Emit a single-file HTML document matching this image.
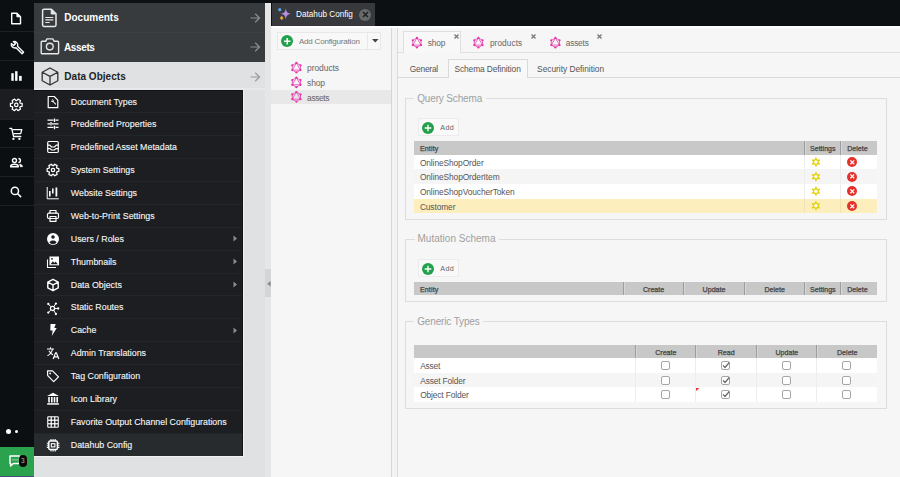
<!DOCTYPE html>
<html><head><meta charset="utf-8">
<style>
*{box-sizing:border-box}
html,body{margin:0;padding:0}
body{width:900px;height:477px;overflow:hidden;position:relative;background:#f6f6f6;font-family:"Liberation Sans",sans-serif}
.a{position:absolute}
.t{position:absolute;white-space:nowrap;line-height:1}
svg{position:absolute;overflow:visible}
</style></head><body>
<div class="a" style="left:0px;top:0px;width:900px;height:25.5px;background:#0d1013;"></div>
<div class="a" style="left:0px;top:0px;width:34px;height:477px;background:#0c0f12;"></div>
<div class="a" style="left:0px;top:89px;width:34px;height:30px;background:#1b1d20;"></div>
<div class="a" style="left:0px;top:31.0px;width:34px;height:1px;background:#1e2124;"></div>
<div class="a" style="left:0px;top:60.0px;width:34px;height:1px;background:#1e2124;"></div>
<div class="a" style="left:0px;top:118.5px;width:34px;height:1px;background:#1e2124;"></div>
<div class="a" style="left:0px;top:147.3px;width:34px;height:1px;background:#1e2124;"></div>
<div class="a" style="left:0px;top:176.2px;width:34px;height:1px;background:#1e2124;"></div>
<div class="a" style="left:0px;top:205.0px;width:34px;height:1px;background:#1e2124;"></div>
<svg style="left:10px;top:11.7px" width="12" height="13" viewBox="0 0 12 13"><path d="M1.7 1.2h5.2l3.6 3.6v7H1.7z" fill="none" stroke="#fff" stroke-width="1.4" stroke-linejoin="round"/><path d="M6.9 1.2v3.6h3.6" fill="#fff" stroke="#fff" stroke-width="1"/></svg>
<svg style="left:8.8px;top:39.4px" width="15" height="15" viewBox="0 0 15 15"><g transform="scale(1.08)"><path d="M2.2 4.2a3.3 3.3 0 0 0 4.3 3.9l5.6 5.6 1.4-1.4-5.6-5.6a3.3 3.3 0 0 0-3.9-4.3l2 2-1.6 1.6z" fill="none" stroke="#fff" stroke-width="1.25" stroke-linejoin="round"/></g></svg>
<svg style="left:10.5px;top:71px" width="11" height="10" viewBox="0 0 11 10"><rect x="0.3" y="2.2" width="2.4" height="7.6" fill="#fff"/><rect x="4.1" y="0.2" width="2.4" height="9.6" fill="#fff"/><rect x="8.1" y="4.9" width="2.6" height="4.9" fill="#fff"/></svg>
<svg style="left:0px;top:0px" width="34" height="200" viewBox="0 0 34 200"><path d="M20.19 103.08 L22.13 103.48 L22.13 106.32 L20.19 106.72 L19.83 107.36 L20.44 109.24 L17.99 110.66 L16.67 109.18 L15.93 109.18 L14.61 110.66 L12.16 109.24 L12.77 107.36 L12.41 106.72 L10.47 106.32 L10.47 103.48 L12.41 103.08 L12.77 102.44 L12.16 100.56 L14.61 99.14 L15.93 100.62 L16.67 100.62 L17.99 99.14 L20.44 100.56 L19.83 102.44Z" fill="none" stroke="#fff" stroke-width="1.25" stroke-linejoin="round"/><circle cx="16.3" cy="104.9" r="1.7" fill="none" stroke="#fff" stroke-width="1.25"/></svg>
<svg style="left:9px;top:127px" width="14" height="14" viewBox="0 0 14 14"><path d="M0.8 1.3L2.7 1.5 4.6 9.5H11.8" fill="none" stroke="#fff" stroke-width="1.3" stroke-linejoin="round" stroke-linecap="round"/><path d="M3.5 2.6H12.8L11.7 6.6H4.5" fill="none" stroke="#fff" stroke-width="1.3" stroke-linejoin="round"/><circle cx="4.4" cy="11.9" r="1.15" fill="#fff"/><circle cx="10.4" cy="11.9" r="1.15" fill="#fff"/></svg>
<svg style="left:9px;top:157px" width="15" height="11" viewBox="0 0 15 11"><circle cx="5.5" cy="3.5" r="2" fill="none" stroke="#fff" stroke-width="1.4"/><path d="M1.6 9.7c0-1.7 1.8-2.5 3.9-2.5s3.9.8 3.9 2.5z" fill="none" stroke="#fff" stroke-width="1.4" stroke-linejoin="round"/><path d="M9.4 1.5a2 2 0 0 1 0 4" fill="none" stroke="#fff" stroke-width="1.4"/><path d="M10.8 7.2c1.6.3 2.6 1.1 2.6 2.5h-2z" fill="#fff" stroke="#fff" stroke-width="0.8" stroke-linejoin="round"/></svg>
<svg style="left:10px;top:185.5px" width="12" height="12" viewBox="0 0 12 12"><circle cx="4.9" cy="4.9" r="3.6" fill="none" stroke="#fff" stroke-width="1.5"/><path d="M7.5 7.5l3.6 3.6" stroke="#fff" stroke-width="1.6"/></svg>
<div class="a" style="left:5.5px;top:428.5px;width:5px;height:5px;border-radius:50%;background:#fff"></div>
<div class="a" style="left:14.5px;top:430px;width:3px;height:3px;border-radius:50%;background:#fff"></div>
<div class="a" style="left:0px;top:447px;width:34px;height:29px;background:#2aa24e;"></div>
<div class="a" style="left:0px;top:476px;width:34px;height:1px;background:#4a4f7a;"></div>
<svg style="left:9.3px;top:454.8px" width="18" height="16" viewBox="0 0 18 16"><path d="M1 1h9.5v7.5H4.2L1.6 11V8.5H1z" fill="none" stroke="#fff" stroke-width="1.45" stroke-linejoin="round"/><circle cx="4" cy="4.8" r=".6" fill="#fff"/><circle cx="6" cy="4.8" r=".6" fill="#fff"/><circle cx="8" cy="4.8" r=".6" fill="#fff"/></svg>
<div class="a" style="left:19px;top:455px;width:8px;height:12px;border-radius:4px;background:#0a0a0a"></div>
<div class="t" style="left:20.9px;top:457.8px;font-size:6.5px;color:#bbb;">3</div>
<div class="a" style="left:34px;top:3px;width:237px;height:474px;background:#e0e1e2;"></div>
<div class="a" style="left:34px;top:3px;width:231px;height:59px;background:#383b3e;"></div>
<div class="a" style="left:34px;top:32px;width:231px;height:1px;background:#3c3f42;"></div>
<div class="a" style="left:34px;top:88px;width:231px;height:2px;background:#e6e8ea;"></div>
<div class="a" style="left:265px;top:3px;width:6px;height:474px;background:#e6e6e7;"></div>
<div class="a" style="left:270.5px;top:26px;width:1px;height:451px;background:#d9d9d9;"></div>
<div class="a" style="left:265px;top:269px;width:6.8px;height:28.3px;background:#d5d5d6;"></div>
<svg style="left:266.5px;top:280.5px" width="4" height="5.5" viewBox="0 0 4 5.5"><path d="M3.6 0L0.3 2.75 3.6 5.5z" fill="#858585"/></svg>
<div class="t" style="left:64.3px;top:12.93px;font-size:10px;color:#fff;font-weight:bold;letter-spacing:-0.007px;">Documents</div>
<div class="t" style="left:64px;top:42.53px;font-size:10px;color:#fff;font-weight:bold;letter-spacing:-0.380px;">Assets</div>
<div class="t" style="left:64.3px;top:71.83px;font-size:10px;color:#1d1f22;font-weight:bold;letter-spacing:0.024px;">Data Objects</div>
<svg style="left:41px;top:8px" width="17" height="20" viewBox="0 0 17 20"><path d="M3 1.2h7.4l4.6 4.6v11.2a1.4 1.4 0 0 1-1.4 1.4H3a1.4 1.4 0 0 1-1.4-1.4V2.6A1.4 1.4 0 0 1 3 1.2z" fill="none" stroke="#e8e8e8" stroke-width="1.5" stroke-linejoin="round"/><path d="M10.2 1.5v4.5h4.5z" fill="#e8e8e8" stroke="#e8e8e8" stroke-width="1" stroke-linejoin="round"/><path d="M4.3 9.5h8M4.3 11.8h8M4.3 14.5h4.3" stroke="#e8e8e8" stroke-width="1.2"/></svg>
<svg style="left:40px;top:37px" width="20" height="18" viewBox="0 0 20 18"><path d="M2.2 4.3h3.4l1.4-2.4h5.8l1.4 2.4h3.4a1 1 0 0 1 1 1v10.4a1 1 0 0 1-1 1H2.2a1 1 0 0 1-1-1V5.3a1 1 0 0 1 1-1z" fill="none" stroke="#e8e8e8" stroke-width="1.4" stroke-linejoin="round"/><circle cx="9.8" cy="9.6" r="3.4" fill="none" stroke="#e8e8e8" stroke-width="1.4"/></svg>
<svg style="left:40.5px;top:67px" width="19" height="19" viewBox="0 0 19 19"><path d="M9 1l7.8 4.2v8.6L9 18 1.2 13.8V5.2z M1.2 5.2L9 9.4l7.8-4.2 M9 9.4V18" fill="none" stroke="#333" stroke-width="1.3" stroke-linejoin="round"/></svg>
<svg style="left:250px;top:12.5px" width="11" height="10" viewBox="0 0 11 10"><path d="M0.5 5h9M5.2 0.8L9.5 5 5.2 9.2" fill="none" stroke="#8c8e90" stroke-width="1.2"/></svg>
<svg style="left:250px;top:41.8px" width="11" height="10" viewBox="0 0 11 10"><path d="M0.5 5h9M5.2 0.8L9.5 5 5.2 9.2" fill="none" stroke="#8c8e90" stroke-width="1.2"/></svg>
<svg style="left:250px;top:71.7px" width="11" height="10" viewBox="0 0 11 10"><path d="M0.5 5h9M5.2 0.8L9.5 5 5.2 9.2" fill="none" stroke="#9a9b9c" stroke-width="1.2"/></svg>
<div class="a" style="left:34px;top:90px;width:209px;height:1px;background:#101215;"></div>
<div class="a" style="left:34px;top:91px;width:207.6px;height:364.5px;background:#1c1e21;"></div>
<div class="a" style="left:241.6px;top:90px;width:1px;height:366px;background:#101215;"></div>
<div class="a" style="left:242.6px;top:90px;width:1px;height:367px;background:#f2f2f2;"></div>
<div class="a" style="left:34px;top:455.5px;width:209px;height:0.6px;background:#101215;"></div>
<div class="a" style="left:34px;top:456px;width:210px;height:1px;background:#f2f2f2;"></div>
<div class="a" style="left:34px;top:433px;width:207.6px;height:22.9px;background:#282b2e;"></div>
<div class="t" style="left:70.8px;top:97.51px;font-size:8.85px;color:#f4f4f4;-webkit-text-stroke:0.2px rgba(255,255,255,0.6)">Document Types</div>
<div class="a" style="left:34px;top:112.3px;width:207.6px;height:1px;background:#232629;"></div>
<div class="t" style="left:70.8px;top:120.39px;font-size:8.85px;color:#f4f4f4;-webkit-text-stroke:0.2px rgba(255,255,255,0.6)">Predefined Properties</div>
<div class="a" style="left:34px;top:135.186px;width:207.6px;height:1px;background:#232629;"></div>
<div class="t" style="left:70.8px;top:143.28px;font-size:8.85px;color:#f4f4f4;-webkit-text-stroke:0.2px rgba(255,255,255,0.6)">Predefined Asset Metadata</div>
<div class="a" style="left:34px;top:158.072px;width:207.6px;height:1px;background:#232629;"></div>
<div class="t" style="left:70.8px;top:166.16px;font-size:8.85px;color:#f4f4f4;-webkit-text-stroke:0.2px rgba(255,255,255,0.6)">System Settings</div>
<div class="a" style="left:34px;top:180.958px;width:207.6px;height:1px;background:#232629;"></div>
<div class="t" style="left:70.8px;top:189.05px;font-size:8.85px;color:#f4f4f4;-webkit-text-stroke:0.2px rgba(255,255,255,0.6)">Website Settings</div>
<div class="a" style="left:34px;top:203.844px;width:207.6px;height:1px;background:#232629;"></div>
<div class="t" style="left:70.8px;top:211.94px;font-size:8.85px;color:#f4f4f4;-webkit-text-stroke:0.2px rgba(255,255,255,0.6)">Web-to-Print Settings</div>
<div class="a" style="left:34px;top:226.73px;width:207.6px;height:1px;background:#232629;"></div>
<div class="t" style="left:70.8px;top:234.82px;font-size:8.85px;color:#f4f4f4;-webkit-text-stroke:0.2px rgba(255,255,255,0.6)">Users / Roles</div>
<svg style="left:233.2px;top:235.11599999999999px" width="5" height="7" viewBox="0 0 5 7"><path d="M0.5 0.5L4 3.5 0.5 6.5z" fill="#8a8c8e"/></svg>
<div class="a" style="left:34px;top:249.61599999999999px;width:207.6px;height:1px;background:#232629;"></div>
<div class="t" style="left:70.8px;top:257.71px;font-size:8.85px;color:#f4f4f4;-webkit-text-stroke:0.2px rgba(255,255,255,0.6)">Thumbnails</div>
<svg style="left:233.2px;top:258.002px" width="5" height="7" viewBox="0 0 5 7"><path d="M0.5 0.5L4 3.5 0.5 6.5z" fill="#8a8c8e"/></svg>
<div class="a" style="left:34px;top:272.502px;width:207.6px;height:1px;background:#232629;"></div>
<div class="t" style="left:70.8px;top:280.59px;font-size:8.85px;color:#f4f4f4;-webkit-text-stroke:0.2px rgba(255,255,255,0.6)">Data Objects</div>
<svg style="left:233.2px;top:280.888px" width="5" height="7" viewBox="0 0 5 7"><path d="M0.5 0.5L4 3.5 0.5 6.5z" fill="#8a8c8e"/></svg>
<div class="a" style="left:34px;top:295.388px;width:207.6px;height:1px;background:#232629;"></div>
<div class="t" style="left:70.8px;top:303.48px;font-size:8.85px;color:#f4f4f4;-webkit-text-stroke:0.2px rgba(255,255,255,0.6)">Static Routes</div>
<div class="a" style="left:34px;top:318.274px;width:207.6px;height:1px;background:#232629;"></div>
<div class="t" style="left:70.8px;top:326.37px;font-size:8.85px;color:#f4f4f4;-webkit-text-stroke:0.2px rgba(255,255,255,0.6)">Cache</div>
<svg style="left:233.2px;top:326.65999999999997px" width="5" height="7" viewBox="0 0 5 7"><path d="M0.5 0.5L4 3.5 0.5 6.5z" fill="#8a8c8e"/></svg>
<div class="a" style="left:34px;top:341.15999999999997px;width:207.6px;height:1px;background:#232629;"></div>
<div class="t" style="left:70.8px;top:349.25px;font-size:8.85px;color:#f4f4f4;-webkit-text-stroke:0.2px rgba(255,255,255,0.6)">Admin Translations</div>
<div class="a" style="left:34px;top:364.046px;width:207.6px;height:1px;background:#232629;"></div>
<div class="t" style="left:70.8px;top:372.14px;font-size:8.85px;color:#f4f4f4;-webkit-text-stroke:0.2px rgba(255,255,255,0.6)">Tag Configuration</div>
<div class="a" style="left:34px;top:386.932px;width:207.6px;height:1px;background:#232629;"></div>
<div class="t" style="left:70.8px;top:395.02px;font-size:8.85px;color:#f4f4f4;-webkit-text-stroke:0.2px rgba(255,255,255,0.6)">Icon Library</div>
<div class="a" style="left:34px;top:409.818px;width:207.6px;height:1px;background:#232629;"></div>
<div class="t" style="left:70.8px;top:417.91px;font-size:8.85px;color:#f4f4f4;-webkit-text-stroke:0.2px rgba(255,255,255,0.6)">Favorite Output Channel Configurations</div>
<div class="a" style="left:34px;top:432.704px;width:207.6px;height:1px;background:#232629;"></div>
<div class="t" style="left:70.8px;top:440.80px;font-size:8.85px;color:#f4f4f4;-webkit-text-stroke:0.2px rgba(255,255,255,0.6)">Datahub Config</div>
<svg style="left:46.0px;top:95px" width="14" height="14" viewBox="0 0 14 14"><path d="M2.2 1.5h6l3.6 3.6v7.6H2.2z" stroke="#fff" fill="none" stroke-width="1.2" stroke-linejoin="round"/><path d="M5 5.2a1.6 1.6 0 0 0 2 1.9l2.4 2.6 .8-.8-2.5-2.5a1.6 1.6 0 0 0-1.9-2l1 1-.8.8z" fill="#fff"/></svg>
<svg style="left:46.0px;top:117px" width="14" height="14" viewBox="0 0 14 14"><path d="M1.5 3.2h6M9.5 3.2h3M1.5 6.8h2.5M6 6.8h6.5M1.5 10.4h6M9.5 10.4h3" stroke="#fff" stroke-width="1.3"/><path d="M8.5 1.5v3.5M5 5.1v3.5M8.5 8.7v3.5" stroke="#fff" stroke-width="1.3"/></svg>
<svg style="left:46.0px;top:140px" width="14" height="14" viewBox="0 0 14 14"><rect x="1.7" y="1.5" width="10.6" height="11" rx="1.2" stroke="#fff" fill="none" stroke-width="1.2" stroke-linejoin="round"/><path d="M1.7 5.2h2l1.8 1.8h3l1.8-1.8h2M1.7 8.6h2.4l1.5 1.4h2.8l1.5-1.4h2.4" stroke="#fff" fill="none" stroke-width="1.2" stroke-linejoin="round"/></svg>
<svg style="left:46.0px;top:163px" width="14" height="14" viewBox="0 0 14 14"><path d="M10.89 5.18 L12.83 5.58 L12.83 8.42 L10.89 8.82 L10.53 9.46 L11.14 11.34 L8.69 12.76 L7.37 11.28 L6.63 11.28 L5.31 12.76 L2.86 11.34 L3.47 9.46 L3.11 8.82 L1.17 8.42 L1.17 5.58 L3.11 5.18 L3.47 4.54 L2.86 2.66 L5.31 1.24 L6.63 2.72 L7.37 2.72 L8.69 1.24 L11.14 2.66 L10.53 4.54Z" fill="none" stroke="#fff" stroke-width="1.25" stroke-linejoin="round"/><circle cx="7" cy="7" r="1.7" fill="none" stroke="#fff" stroke-width="1.25"/></svg>
<svg style="left:46.0px;top:186px" width="14" height="14" viewBox="0 0 14 14"><path d="M1.2 1v11.8h11.6" stroke="#fff" stroke-width="1" fill="none"/><rect x="3" y="5" width="1.6" height="5.5" fill="#fff"/><rect x="6" y="2.5" width="1.6" height="5" fill="#fff"/><rect x="9.5" y="1.5" width="1.8" height="9" fill="#fff"/></svg>
<svg style="left:46.0px;top:209px" width="14" height="14" viewBox="0 0 14 14"><path d="M4 4.2V1.5h6v2.7" stroke="#fff" fill="none" stroke-width="1.2" stroke-linejoin="round"/><rect x="1.5" y="4.2" width="11" height="5.3" rx="1.2" stroke="#fff" fill="none" stroke-width="1.2" stroke-linejoin="round"/><rect x="4" y="7.5" width="6" height="4.8" stroke="#fff" fill="none" stroke-width="1.2" stroke-linejoin="round"/></svg>
<svg style="left:46.0px;top:232px" width="14" height="14" viewBox="0 0 14 14"><circle cx="7" cy="7" r="6" fill="#fff"/><circle cx="7" cy="5" r="1.8" fill="#1c1e21"/><path d="M3.4 10.5c.8-1.4 2-2 3.6-2s2.8.6 3.6 2a4.6 4.6 0 0 1-7.2 0z" fill="#1c1e21"/></svg>
<svg style="left:46.0px;top:255px" width="14" height="14" viewBox="0 0 14 14"><path d="M1.5 4.5v8h8.5" stroke="#fff" stroke-width="1.1" fill="none"/><rect x="3.5" y="1.5" width="9.5" height="8.8" fill="#fff"/><path d="M4.6 9.2l2.2-3 1.6 1.8 1.2-1.4 2.2 2.6z" fill="#1c1e21"/><circle cx="6" cy="3.8" r=".9" fill="#1c1e21"/></svg>
<svg style="left:46.0px;top:278px" width="14" height="14" viewBox="0 0 14 14"><path d="M7 1.3l5.2 2.8v5.8L7 12.7 1.8 9.9V4.1z M1.8 4.1L7 6.9l5.2-2.8 M7 6.9v5.8" stroke="#fff" fill="none" stroke-width="1.4" stroke-linejoin="round"/></svg>
<svg style="left:46.0px;top:301px" width="14" height="14" viewBox="0 0 14 14"><circle cx="6.5" cy="7.4" r="2.1" fill="none" stroke="#fff" stroke-width="1.3"/><path d="M5.05 5.88L2.30 3.00M7.71 5.69L9.90 2.60M8.60 7.44L12.20 7.50M5.02 8.88L2.30 11.60M7.59 9.20L9.90 13.00" stroke="#fff" stroke-width="1"/><circle cx="2.3" cy="3.0" r="1.15" fill="#fff"/><circle cx="9.9" cy="2.6" r="1.15" fill="#fff"/><circle cx="12.2" cy="7.5" r="1.15" fill="#fff"/><circle cx="2.3" cy="11.6" r="1.15" fill="#fff"/><circle cx="9.9" cy="13.0" r="1.15" fill="#fff"/></svg>
<svg style="left:46.0px;top:323px" width="14" height="14" viewBox="0 0 14 14"><path d="M4.5 1h5.2L8.3 5h2.4L5.8 13l.9-5.6H4.3z" fill="#fff"/></svg>
<svg style="left:46.0px;top:346px" width="14" height="14" viewBox="0 0 14 14"><path d="M1 3h7M4.5 1.2V3M6.5 3C6 6 4 8.5 1.5 9.8M3 4.8c1 2 2.5 3.4 4 4" stroke="#fff" stroke-width="1.1" fill="none"/><path d="M7.2 13l2.4-6.2h.8L12.8 13M8.1 10.9h3.8" stroke="#fff" stroke-width="1.2" fill="none"/></svg>
<svg style="left:46.0px;top:369px" width="14" height="14" viewBox="0 0 14 14"><path d="M1.5 1.8h5l6 6-4.8 4.8-6-6z" stroke="#fff" fill="none" stroke-width="1.2" stroke-linejoin="round"/><circle cx="4.2" cy="4.4" r="0.9" fill="#fff"/></svg>
<svg style="left:46.0px;top:392px" width="14" height="14" viewBox="0 0 14 14"><path d="M7 0.8L13 4H1z" fill="#fff"/><rect x="1.2" y="11.2" width="11.6" height="1.5" fill="#fff"/><rect x="2.2" y="5" width="1.6" height="5.5" fill="#fff"/><rect x="5" y="5" width="1.6" height="5.5" fill="#fff"/><rect x="7.7" y="5" width="1.6" height="5.5" fill="#fff"/><rect x="10.4" y="5" width="1.6" height="5.5" fill="#fff"/></svg>
<svg style="left:46.0px;top:415px" width="14" height="14" viewBox="0 0 14 14"><rect x="1.2" y="1.2" width="11.6" height="11.6" rx="1.2" fill="#fff"/><rect x="2.30" y="2.30" width="2.3" height="2.3" fill="#1c1e21"/><rect x="2.30" y="5.85" width="2.3" height="2.3" fill="#1c1e21"/><rect x="2.30" y="9.40" width="2.3" height="2.3" fill="#1c1e21"/><rect x="5.85" y="2.30" width="2.3" height="2.3" fill="#1c1e21"/><rect x="5.85" y="5.85" width="2.3" height="2.3" fill="#1c1e21"/><rect x="5.85" y="9.40" width="2.3" height="2.3" fill="#1c1e21"/><rect x="9.40" y="2.30" width="2.3" height="2.3" fill="#1c1e21"/><rect x="9.40" y="5.85" width="2.3" height="2.3" fill="#1c1e21"/><rect x="9.40" y="9.40" width="2.3" height="2.3" fill="#1c1e21"/></svg>
<svg style="left:46.0px;top:438px" width="14" height="14" viewBox="0 0 14 14"><rect x="2.8" y="3" width="8.6" height="8.6" rx="1.3" fill="none" stroke="#fff" stroke-width="1.5"/><rect x="5.3" y="5.7" width="3.6" height="3.2" fill="none" stroke="#fff" stroke-width="1.1"/><path d="M5 1v2M7.1 1v2M9.2 1v2M5 11.6v2M7.1 11.6v2M9.2 11.6v2M0.8 5.2h2M0.8 7.3h2M0.8 9.4h2M11.4 5.2h2M11.4 7.3h2M11.4 9.4h2" stroke="#fff" stroke-width="1.1"/></svg>
<div class="a" style="left:271.8px;top:3px;width:103.2px;height:22.6px;background:#37393c;"></div>
<div class="t" style="left:296.1px;top:11.06px;font-size:8.2px;color:#fff;letter-spacing:-0.006px;">Datahub Config</div>
<svg style="left:0px;top:0px" width="10" height="10" viewBox="0 0 10 10"><path d="M285.8 7.9C286.3 12 287.2 13.1 291.1 13.8 287.2 14.5 286.3 15.6 285.8 19.7 285.3 15.6 284.4 14.5 280.5 13.8 284.4 13.1 285.3 12 285.8 7.9z" fill="#b78fe2"/><circle cx="279.8" cy="9.7" r="1.6" fill="#5ba6e8"/><path d="M281.7 15.7l1.8 2.3-1.8 2.3-1.8-2.3z" fill="#f2a52e"/></svg>
<div class="a" style="left:359.2px;top:8.6px;width:12.2px;height:12.2px;border-radius:50%;background:#67696b"></div>
<svg style="left:362px;top:11.4px" width="7" height="7" viewBox="0 0 7 7"><path d="M1 1l5 5M6 1l-5 5" stroke="#1f2123" stroke-width="1.5"/></svg>
<div class="a" style="left:271px;top:25.5px;width:629px;height:2px;background:#ffffff;"></div>
<div class="a" style="left:271px;top:27.5px;width:120px;height:449.5px;background:#f6f6f6;"></div>
<div class="a" style="left:391px;top:27.5px;width:1px;height:449.5px;background:#d6d6d6;"></div>
<div class="a" style="left:392px;top:27.5px;width:5px;height:449.5px;background:#f3f3f3;"></div>
<div class="a" style="left:397px;top:27.5px;width:1px;height:449.5px;background:#dadada;"></div>
<div class="a" style="left:398px;top:27.5px;width:502px;height:449.5px;background:#f6f6f6;"></div>
<div class="a" style="left:277.2px;top:31.8px;width:104.3px;height:18.7px;border:1px solid #e8e8e8;background:#f8f8f8"></div>
<div class="a" style="left:367.3px;top:32px;width:1px;height:18.4px;background:#e8e8e8;"></div>
<div class="a" style="left:280.5px;top:34.7px;width:12.5px;height:12.5px;border-radius:50%;background:#22a04b"></div>
<svg style="left:280.5px;top:34.7px" width="12.5" height="12.5" viewBox="0 0 12.5 12.5"><path d="M6.25 3v6.5M3 6.25h6.5" stroke="#fff" stroke-width="1.6"/></svg>
<div class="t" style="left:298.9px;top:37.53px;font-size:8px;color:#777;letter-spacing:-0.190px;">Add Configuration</div>
<svg style="left:372px;top:39px" width="7" height="4" viewBox="0 0 7 4"><path d="M0 0h6.6L3.3 3.6z" fill="#444"/></svg>
<div class="a" style="left:271px;top:89.5px;width:120px;height:14px;background:#e8e8e8;"></div>
<svg style="left:0px;top:0px" width="10" height="10" viewBox="0 0 10 10"><path d="M296.40 62.95 L300.51 65.33 L300.51 70.08 L296.40 72.45 L292.29 70.08 L292.29 65.33Z" fill="none" stroke="#e535ab" stroke-width="0.75"/><path d="M296.40 62.95 L300.51 70.08 L292.29 70.08Z" fill="none" stroke="#e535ab" stroke-width="0.75"/><circle cx="296.40" cy="62.95" r="1.15" fill="#e535ab"/><circle cx="300.51" cy="65.33" r="1.15" fill="#e535ab"/><circle cx="300.51" cy="70.08" r="1.15" fill="#e535ab"/><circle cx="296.40" cy="72.45" r="1.15" fill="#e535ab"/><circle cx="292.29" cy="70.08" r="1.15" fill="#e535ab"/><circle cx="292.29" cy="65.33" r="1.15" fill="#e535ab"/></svg>
<div class="t" style="left:307.1px;top:64.40px;font-size:8.5px;color:#666;letter-spacing:-0.086px;">products</div>
<svg style="left:0px;top:0px" width="10" height="10" viewBox="0 0 10 10"><path d="M296.40 77.65 L300.51 80.03 L300.51 84.78 L296.40 87.15 L292.29 84.78 L292.29 80.03Z" fill="none" stroke="#e535ab" stroke-width="0.75"/><path d="M296.40 77.65 L300.51 84.78 L292.29 84.78Z" fill="none" stroke="#e535ab" stroke-width="0.75"/><circle cx="296.40" cy="77.65" r="1.15" fill="#e535ab"/><circle cx="300.51" cy="80.03" r="1.15" fill="#e535ab"/><circle cx="300.51" cy="84.78" r="1.15" fill="#e535ab"/><circle cx="296.40" cy="87.15" r="1.15" fill="#e535ab"/><circle cx="292.29" cy="84.78" r="1.15" fill="#e535ab"/><circle cx="292.29" cy="80.03" r="1.15" fill="#e535ab"/></svg>
<div class="t" style="left:307.1px;top:79.10px;font-size:8.5px;color:#666;letter-spacing:-0.211px;">shop</div>
<svg style="left:0px;top:0px" width="10" height="10" viewBox="0 0 10 10"><path d="M296.40 92.05 L300.51 94.42 L300.51 99.17 L296.40 101.55 L292.29 99.17 L292.29 94.42Z" fill="none" stroke="#e535ab" stroke-width="0.75"/><path d="M296.40 92.05 L300.51 99.17 L292.29 99.17Z" fill="none" stroke="#e535ab" stroke-width="0.75"/><circle cx="296.40" cy="92.05" r="1.15" fill="#e535ab"/><circle cx="300.51" cy="94.42" r="1.15" fill="#e535ab"/><circle cx="300.51" cy="99.17" r="1.15" fill="#e535ab"/><circle cx="296.40" cy="101.55" r="1.15" fill="#e535ab"/><circle cx="292.29" cy="99.17" r="1.15" fill="#e535ab"/><circle cx="292.29" cy="94.42" r="1.15" fill="#e535ab"/></svg>
<div class="t" style="left:307.1px;top:93.50px;font-size:8.5px;color:#666;letter-spacing:-0.433px;">assets</div>
<div class="a" style="left:398px;top:51.5px;width:502px;height:1px;background:#e0e0e0;"></div>
<div class="a" style="left:403.2px;top:31px;width:57.8px;height:21.5px;background:#f8f8f8;border:1px solid #dfdfdf;border-bottom:none"></div>
<svg style="left:0px;top:0px" width="10" height="10" viewBox="0 0 10 10"><path d="M416.90 37.95 L421.01 40.33 L421.01 45.08 L416.90 47.45 L412.79 45.08 L412.79 40.33Z" fill="none" stroke="#e535ab" stroke-width="0.75"/><path d="M416.90 37.95 L421.01 45.08 L412.79 45.08Z" fill="none" stroke="#e535ab" stroke-width="0.75"/><circle cx="416.90" cy="37.95" r="1.15" fill="#e535ab"/><circle cx="421.01" cy="40.33" r="1.15" fill="#e535ab"/><circle cx="421.01" cy="45.08" r="1.15" fill="#e535ab"/><circle cx="416.90" cy="47.45" r="1.15" fill="#e535ab"/><circle cx="412.79" cy="45.08" r="1.15" fill="#e535ab"/><circle cx="412.79" cy="40.33" r="1.15" fill="#e535ab"/></svg>
<div class="t" style="left:427.8px;top:39.07px;font-size:8.3px;color:#666;letter-spacing:-0.166px;">shop</div>
<svg style="left:454.2px;top:34.2px" width="5" height="5" viewBox="0 0 5 5"><path d="M0.5 0.5l4 4M4.5 0.5l-4 4" stroke="#777" stroke-width="1.3"/></svg>
<svg style="left:0px;top:0px" width="10" height="10" viewBox="0 0 10 10"><path d="M478.40 37.95 L482.51 40.33 L482.51 45.08 L478.40 47.45 L474.29 45.08 L474.29 40.33Z" fill="none" stroke="#e535ab" stroke-width="0.75"/><path d="M478.40 37.95 L482.51 45.08 L474.29 45.08Z" fill="none" stroke="#e535ab" stroke-width="0.75"/><circle cx="478.40" cy="37.95" r="1.15" fill="#e535ab"/><circle cx="482.51" cy="40.33" r="1.15" fill="#e535ab"/><circle cx="482.51" cy="45.08" r="1.15" fill="#e535ab"/><circle cx="478.40" cy="47.45" r="1.15" fill="#e535ab"/><circle cx="474.29" cy="45.08" r="1.15" fill="#e535ab"/><circle cx="474.29" cy="40.33" r="1.15" fill="#e535ab"/></svg>
<div class="t" style="left:489.9px;top:39.07px;font-size:8.3px;color:#666;letter-spacing:0.067px;">products</div>
<svg style="left:530.7px;top:34.2px" width="5" height="5" viewBox="0 0 5 5"><path d="M0.5 0.5l4 4M4.5 0.5l-4 4" stroke="#777" stroke-width="1.3"/></svg>
<svg style="left:0px;top:0px" width="10" height="10" viewBox="0 0 10 10"><path d="M555.40 37.95 L559.51 40.33 L559.51 45.08 L555.40 47.45 L551.29 45.08 L551.29 40.33Z" fill="none" stroke="#e535ab" stroke-width="0.75"/><path d="M555.40 37.95 L559.51 45.08 L551.29 45.08Z" fill="none" stroke="#e535ab" stroke-width="0.75"/><circle cx="555.40" cy="37.95" r="1.15" fill="#e535ab"/><circle cx="559.51" cy="40.33" r="1.15" fill="#e535ab"/><circle cx="559.51" cy="45.08" r="1.15" fill="#e535ab"/><circle cx="555.40" cy="47.45" r="1.15" fill="#e535ab"/><circle cx="551.29" cy="45.08" r="1.15" fill="#e535ab"/><circle cx="551.29" cy="40.33" r="1.15" fill="#e535ab"/></svg>
<div class="t" style="left:565.7px;top:39.07px;font-size:8.3px;color:#666;letter-spacing:-0.158px;">assets</div>
<svg style="left:596.9px;top:34.2px" width="5" height="5" viewBox="0 0 5 5"><path d="M0.5 0.5l4 4M4.5 0.5l-4 4" stroke="#777" stroke-width="1.3"/></svg>
<div class="a" style="left:398px;top:77px;width:502px;height:1px;background:#dadada;"></div>
<div class="a" style="left:447.6px;top:59px;width:80.2px;height:19px;background:#f8f8f8;border:1px solid #dadada;border-bottom:none"></div>
<div class="t" style="left:409.7px;top:65.09px;font-size:8.4px;color:#555;letter-spacing:-0.214px;">General</div>
<div class="t" style="left:454.5px;top:65.09px;font-size:8.4px;color:#555;letter-spacing:-0.104px;">Schema Definition</div>
<div class="t" style="left:537.1px;top:65.09px;font-size:8.4px;color:#555;letter-spacing:-0.028px;">Security Definition</div>
<div class="a" style="left:404.5px;top:98.3px;width:482.5px;height:121.7px;border:1px solid #dddddd"></div>
<div class="a" style="left:414.2px;top:95.3px;width:71.5px;height:6px;background:#f6f6f6;"></div>
<div class="t" style="left:417.2px;top:93.93px;font-size:10px;color:#a0a0a0;letter-spacing:-0.154px;">Query Schema</div>
<div class="a" style="left:404.5px;top:238.8px;width:482.5px;height:63.69999999999999px;border:1px solid #dddddd"></div>
<div class="a" style="left:414.5px;top:235.8px;width:84.5px;height:6px;background:#f6f6f6;"></div>
<div class="t" style="left:417.5px;top:234.43px;font-size:10px;color:#a0a0a0;letter-spacing:0.013px;">Mutation Schema</div>
<div class="a" style="left:404.5px;top:321.4px;width:482.5px;height:88.0px;border:1px solid #dddddd"></div>
<div class="a" style="left:414.2px;top:318.4px;width:69.1px;height:6px;background:#f6f6f6;"></div>
<div class="t" style="left:417.2px;top:317.03px;font-size:10px;color:#a0a0a0;letter-spacing:-0.141px;">Generic Types</div>
<div class="a" style="left:418px;top:118.4px;width:41px;height:17.6px;border:1px solid #ebebeb;background:#f9f9f9"></div>
<div class="a" style="left:422.2px;top:121.60000000000001px;width:12px;height:12px;border-radius:50%;background:#22a04b"></div>
<svg style="left:422.2px;top:121.60000000000001px" width="12" height="12" viewBox="0 0 12 12"><path d="M6 2.7v6.6M2.7 6h6.6" stroke="#fff" stroke-width="1.35"/></svg>
<div class="t" style="left:440.3px;top:124.30px;font-size:7.2px;color:#666;letter-spacing:0.344px;">Add</div>
<div class="a" style="left:418px;top:259.3px;width:41px;height:17.6px;border:1px solid #ebebeb;background:#f9f9f9"></div>
<div class="a" style="left:422.2px;top:262.5px;width:12px;height:12px;border-radius:50%;background:#22a04b"></div>
<svg style="left:422.2px;top:262.5px" width="12" height="12" viewBox="0 0 12 12"><path d="M6 2.7v6.6M2.7 6h6.6" stroke="#fff" stroke-width="1.35"/></svg>
<div class="t" style="left:440.3px;top:265.20px;font-size:7.2px;color:#666;letter-spacing:0.344px;">Add</div>
<div class="a" style="left:413.7px;top:141.2px;width:463.3px;height:13.6px;background:#c8c8c8;"></div>
<div class="a" style="left:804.1px;top:141.2px;width:1px;height:13.6px;background:#9d9d9d;"></div>
<div class="a" style="left:805.1px;top:141.2px;width:0.6px;height:13.6px;background:#d6d6d6;"></div>
<div class="a" style="left:839.9px;top:141.2px;width:1px;height:13.6px;background:#9d9d9d;"></div>
<div class="a" style="left:840.9px;top:141.2px;width:0.6px;height:13.6px;background:#d6d6d6;"></div>
<div class="t" style="left:419.9px;top:146.09px;font-size:7.1px;color:#444;letter-spacing:0.128px;-webkit-text-stroke:0.25px #444">Entity</div>
<div class="t" style="left:809.9728515625px;top:146.09px;font-size:7.1px;color:#444;-webkit-text-stroke:0.25px #444">Settings</div>
<div class="t" style="left:847.1382812500001px;top:146.09px;font-size:7.1px;color:#444;-webkit-text-stroke:0.25px #444">Delete</div>
<div class="a" style="left:413.7px;top:154.8px;width:463.3px;height:14.5px;background:#ffffff;"></div>
<div class="a" style="left:804.1px;top:154.8px;width:1px;height:14.5px;background:#ededed;"></div>
<div class="a" style="left:839.9px;top:154.8px;width:1px;height:14.5px;background:#ededed;"></div>
<div class="t" style="left:419.9px;top:158.84px;font-size:8.4px;color:#555;letter-spacing:-0.100px;">OnlineShopOrder</div>
<svg style="left:0px;top:0px" width="10" height="10" viewBox="0 0 10 10"><path d="M814.99 159.09 L815.26 157.49 L816.54 157.49 L816.81 159.09 L818.01 159.78 L819.52 159.22 L820.17 160.33 L818.92 161.35 L818.92 162.75 L820.17 163.77 L819.52 164.88 L818.01 164.32 L816.81 165.01 L816.54 166.61 L815.26 166.61 L814.99 165.01 L813.79 164.32 L812.28 164.88 L811.63 163.77 L812.88 162.75 L812.88 161.35 L811.63 160.33 L812.28 159.22 L813.79 159.78Z" fill="#e3d10f"/><circle cx="815.9" cy="162.05" r="1.7" fill="#fff"/></svg>
<div class="a" style="left:847.3px;top:157.05px;width:10px;height:10px;border-radius:50%;background:#e6302a"></div>
<svg style="left:850.1px;top:159.75px" width="5" height="5" viewBox="0 0 5 5"><path d="M0.4 0.4l3.8 3.8M4.2 0.4L0.4 4.2" stroke="#fff" stroke-width="1.3"/></svg>
<div class="a" style="left:413.7px;top:169.3px;width:463.3px;height:14.699999999999989px;background:#f5f5f5;"></div>
<div class="a" style="left:804.1px;top:169.3px;width:1px;height:14.699999999999989px;background:#ededed;"></div>
<div class="a" style="left:839.9px;top:169.3px;width:1px;height:14.699999999999989px;background:#ededed;"></div>
<div class="t" style="left:419.9px;top:173.44px;font-size:8.4px;color:#555;letter-spacing:-0.097px;">OnlineShopOrderItem</div>
<svg style="left:0px;top:0px" width="10" height="10" viewBox="0 0 10 10"><path d="M814.99 173.69 L815.26 172.09 L816.54 172.09 L816.81 173.69 L818.01 174.38 L819.52 173.82 L820.17 174.93 L818.92 175.95 L818.92 177.35 L820.17 178.37 L819.52 179.48 L818.01 178.92 L816.81 179.61 L816.54 181.21 L815.26 181.21 L814.99 179.61 L813.79 178.92 L812.28 179.48 L811.63 178.37 L812.88 177.35 L812.88 175.95 L811.63 174.93 L812.28 173.82 L813.79 174.38Z" fill="#e3d10f"/><circle cx="815.9" cy="176.65" r="1.7" fill="#fff"/></svg>
<div class="a" style="left:847.3px;top:171.65px;width:10px;height:10px;border-radius:50%;background:#e6302a"></div>
<svg style="left:850.1px;top:174.35px" width="5" height="5" viewBox="0 0 5 5"><path d="M0.4 0.4l3.8 3.8M4.2 0.4L0.4 4.2" stroke="#fff" stroke-width="1.3"/></svg>
<div class="a" style="left:413.7px;top:184.0px;width:463.3px;height:14.5px;background:#ffffff;"></div>
<div class="a" style="left:804.1px;top:184.0px;width:1px;height:14.5px;background:#ededed;"></div>
<div class="a" style="left:839.9px;top:184.0px;width:1px;height:14.5px;background:#ededed;"></div>
<div class="t" style="left:419.9px;top:188.04px;font-size:8.4px;color:#555;letter-spacing:-0.099px;">OnlineShopVoucherToken</div>
<svg style="left:0px;top:0px" width="10" height="10" viewBox="0 0 10 10"><path d="M814.99 188.29 L815.26 186.69 L816.54 186.69 L816.81 188.29 L818.01 188.98 L819.52 188.42 L820.17 189.53 L818.92 190.55 L818.92 191.95 L820.17 192.97 L819.52 194.08 L818.01 193.52 L816.81 194.21 L816.54 195.81 L815.26 195.81 L814.99 194.21 L813.79 193.52 L812.28 194.08 L811.63 192.97 L812.88 191.95 L812.88 190.55 L811.63 189.53 L812.28 188.42 L813.79 188.98Z" fill="#e3d10f"/><circle cx="815.9" cy="191.25" r="1.7" fill="#fff"/></svg>
<div class="a" style="left:847.3px;top:186.25px;width:10px;height:10px;border-radius:50%;background:#e6302a"></div>
<svg style="left:850.1px;top:188.95px" width="5" height="5" viewBox="0 0 5 5"><path d="M0.4 0.4l3.8 3.8M4.2 0.4L0.4 4.2" stroke="#fff" stroke-width="1.3"/></svg>
<div class="a" style="left:413.7px;top:198.5px;width:463.3px;height:14.599999999999994px;background:#fdeebd;"></div>
<div class="a" style="left:804.1px;top:198.5px;width:1px;height:14.599999999999994px;background:#efe3b8;"></div>
<div class="a" style="left:839.9px;top:198.5px;width:1px;height:14.599999999999994px;background:#efe3b8;"></div>
<div class="t" style="left:419.9px;top:202.59px;font-size:8.4px;color:#555;letter-spacing:-0.111px;">Customer</div>
<svg style="left:0px;top:0px" width="10" height="10" viewBox="0 0 10 10"><path d="M814.99 202.84 L815.26 201.24 L816.54 201.24 L816.81 202.84 L818.01 203.53 L819.52 202.97 L820.17 204.08 L818.92 205.10 L818.92 206.50 L820.17 207.52 L819.52 208.63 L818.01 208.07 L816.81 208.76 L816.54 210.36 L815.26 210.36 L814.99 208.76 L813.79 208.07 L812.28 208.63 L811.63 207.52 L812.88 206.50 L812.88 205.10 L811.63 204.08 L812.28 202.97 L813.79 203.53Z" fill="#e3d10f"/><circle cx="815.9" cy="205.8" r="1.7" fill="#fff"/></svg>
<div class="a" style="left:847.3px;top:200.8px;width:10px;height:10px;border-radius:50%;background:#e6302a"></div>
<svg style="left:850.1px;top:203.5px" width="5" height="5" viewBox="0 0 5 5"><path d="M0.4 0.4l3.8 3.8M4.2 0.4L0.4 4.2" stroke="#fff" stroke-width="1.3"/></svg>
<div class="a" style="left:413.7px;top:281.8px;width:463.3px;height:13.4px;background:#c8c8c8;"></div>
<div class="a" style="left:622.8px;top:281.8px;width:1px;height:13.4px;background:#9d9d9d;"></div>
<div class="a" style="left:623.8px;top:281.8px;width:0.6px;height:13.4px;background:#d6d6d6;"></div>
<div class="a" style="left:682.8px;top:281.8px;width:1px;height:13.4px;background:#9d9d9d;"></div>
<div class="a" style="left:683.8px;top:281.8px;width:0.6px;height:13.4px;background:#d6d6d6;"></div>
<div class="a" style="left:743.7px;top:281.8px;width:1px;height:13.4px;background:#9d9d9d;"></div>
<div class="a" style="left:744.7px;top:281.8px;width:0.6px;height:13.4px;background:#d6d6d6;"></div>
<div class="a" style="left:804.1px;top:281.8px;width:1px;height:13.4px;background:#9d9d9d;"></div>
<div class="a" style="left:805.1px;top:281.8px;width:0.6px;height:13.4px;background:#d6d6d6;"></div>
<div class="a" style="left:840.0px;top:281.8px;width:1px;height:13.4px;background:#9d9d9d;"></div>
<div class="a" style="left:841.0px;top:281.8px;width:0.6px;height:13.4px;background:#d6d6d6;"></div>
<div class="t" style="left:419.9px;top:286.69px;font-size:7.1px;color:#444;letter-spacing:0.128px;-webkit-text-stroke:0.25px #444">Entity</div>
<div class="t" style="left:642.9444531249999px;top:286.69px;font-size:7.1px;color:#444;-webkit-text-stroke:0.25px #444">Create</div>
<div class="t" style="left:702.602359375px;top:286.69px;font-size:7.1px;color:#444;-webkit-text-stroke:0.25px #444">Update</div>
<div class="t" style="left:764.43828125px;top:286.69px;font-size:7.1px;color:#444;-webkit-text-stroke:0.25px #444">Delete</div>
<div class="t" style="left:810.0228515624999px;top:286.69px;font-size:7.1px;color:#444;-webkit-text-stroke:0.25px #444">Settings</div>
<div class="t" style="left:847.18828125px;top:286.69px;font-size:7.1px;color:#444;-webkit-text-stroke:0.25px #444">Delete</div>
<div class="a" style="left:413.7px;top:345.3px;width:463.3px;height:12.9px;background:#c8c8c8;"></div>
<div class="a" style="left:635.0px;top:345.3px;width:1px;height:12.9px;background:#9d9d9d;"></div>
<div class="a" style="left:636.0px;top:345.3px;width:0.6px;height:12.9px;background:#d6d6d6;"></div>
<div class="a" style="left:695.0px;top:345.3px;width:1px;height:12.9px;background:#9d9d9d;"></div>
<div class="a" style="left:696.0px;top:345.3px;width:0.6px;height:12.9px;background:#d6d6d6;"></div>
<div class="a" style="left:755.8px;top:345.3px;width:1px;height:12.9px;background:#9d9d9d;"></div>
<div class="a" style="left:756.8px;top:345.3px;width:0.6px;height:12.9px;background:#d6d6d6;"></div>
<div class="a" style="left:816.4px;top:345.3px;width:1px;height:12.9px;background:#9d9d9d;"></div>
<div class="a" style="left:817.4px;top:345.3px;width:0.6px;height:12.9px;background:#d6d6d6;"></div>
<div class="t" style="left:655.1444531249999px;top:350.19px;font-size:7.1px;color:#444;-webkit-text-stroke:0.25px #444">Create</div>
<div class="t" style="left:717.7132812499999px;top:350.19px;font-size:7.1px;color:#444;-webkit-text-stroke:0.25px #444">Read</div>
<div class="t" style="left:775.4523593749999px;top:350.19px;font-size:7.1px;color:#444;-webkit-text-stroke:0.25px #444">Update</div>
<div class="t" style="left:836.98828125px;top:350.19px;font-size:7.1px;color:#444;-webkit-text-stroke:0.25px #444">Delete</div>
<div class="a" style="left:413.7px;top:358.2px;width:463.3px;height:14.600000000000023px;background:#ffffff;"></div>
<div class="a" style="left:635.0px;top:358.2px;width:1px;height:14.600000000000023px;background:#ededed;"></div>
<div class="a" style="left:695.0px;top:358.2px;width:1px;height:14.600000000000023px;background:#ededed;"></div>
<div class="a" style="left:755.8px;top:358.2px;width:1px;height:14.600000000000023px;background:#ededed;"></div>
<div class="a" style="left:816.4px;top:358.2px;width:1px;height:14.600000000000023px;background:#ededed;"></div>
<div class="t" style="left:420.2px;top:362.29px;font-size:8.4px;color:#555;letter-spacing:-0.181px;">Asset</div>
<div class="a" style="left:660.9px;top:360.9px;width:9.2px;height:9.2px;border:1px solid #a6a6a6;border-radius:2px;background:#fff"></div>
<div class="a" style="left:721.1999999999999px;top:360.9px;width:9.2px;height:9.2px;border:1px solid #a6a6a6;border-radius:2px;background:#fff"></div>
<svg style="left:722.3px;top:362.0px" width="8" height="7" viewBox="0 0 8 7"><path d="M1 3.3l2 2.2L7.3 0.5" fill="none" stroke="#666" stroke-width="1.2"/></svg>
<div class="a" style="left:781.6px;top:360.9px;width:9.2px;height:9.2px;border:1px solid #a6a6a6;border-radius:2px;background:#fff"></div>
<div class="a" style="left:841.9px;top:360.9px;width:9.2px;height:9.2px;border:1px solid #a6a6a6;border-radius:2px;background:#fff"></div>
<div class="a" style="left:413.7px;top:372.8px;width:463.3px;height:14.599999999999966px;background:#f5f5f5;"></div>
<div class="a" style="left:635.0px;top:372.8px;width:1px;height:14.599999999999966px;background:#ededed;"></div>
<div class="a" style="left:695.0px;top:372.8px;width:1px;height:14.599999999999966px;background:#ededed;"></div>
<div class="a" style="left:755.8px;top:372.8px;width:1px;height:14.599999999999966px;background:#ededed;"></div>
<div class="a" style="left:816.4px;top:372.8px;width:1px;height:14.599999999999966px;background:#ededed;"></div>
<div class="t" style="left:420.2px;top:376.89px;font-size:8.4px;color:#555;letter-spacing:-0.148px;">Asset Folder</div>
<div class="a" style="left:660.9px;top:375.5px;width:9.2px;height:9.2px;border:1px solid #a6a6a6;border-radius:2px;background:#fff"></div>
<div class="a" style="left:721.1999999999999px;top:375.5px;width:9.2px;height:9.2px;border:1px solid #a6a6a6;border-radius:2px;background:#fff"></div>
<svg style="left:722.3px;top:376.6px" width="8" height="7" viewBox="0 0 8 7"><path d="M1 3.3l2 2.2L7.3 0.5" fill="none" stroke="#666" stroke-width="1.2"/></svg>
<div class="a" style="left:781.6px;top:375.5px;width:9.2px;height:9.2px;border:1px solid #a6a6a6;border-radius:2px;background:#fff"></div>
<div class="a" style="left:841.9px;top:375.5px;width:9.2px;height:9.2px;border:1px solid #a6a6a6;border-radius:2px;background:#fff"></div>
<div class="a" style="left:413.7px;top:387.4px;width:463.3px;height:14.600000000000023px;background:#ffffff;"></div>
<div class="a" style="left:635.0px;top:387.4px;width:1px;height:14.600000000000023px;background:#ededed;"></div>
<div class="a" style="left:695.0px;top:387.4px;width:1px;height:14.600000000000023px;background:#ededed;"></div>
<div class="a" style="left:755.8px;top:387.4px;width:1px;height:14.600000000000023px;background:#ededed;"></div>
<div class="a" style="left:816.4px;top:387.4px;width:1px;height:14.600000000000023px;background:#ededed;"></div>
<div class="t" style="left:420.2px;top:391.49px;font-size:8.4px;color:#555;letter-spacing:-0.145px;">Object Folder</div>
<div class="a" style="left:660.9px;top:390.09999999999997px;width:9.2px;height:9.2px;border:1px solid #a6a6a6;border-radius:2px;background:#fff"></div>
<div class="a" style="left:721.1999999999999px;top:390.09999999999997px;width:9.2px;height:9.2px;border:1px solid #a6a6a6;border-radius:2px;background:#fff"></div>
<svg style="left:722.3px;top:391.2px" width="8" height="7" viewBox="0 0 8 7"><path d="M1 3.3l2 2.2L7.3 0.5" fill="none" stroke="#666" stroke-width="1.2"/></svg>
<div class="a" style="left:781.6px;top:390.09999999999997px;width:9.2px;height:9.2px;border:1px solid #a6a6a6;border-radius:2px;background:#fff"></div>
<div class="a" style="left:841.9px;top:390.09999999999997px;width:9.2px;height:9.2px;border:1px solid #a6a6a6;border-radius:2px;background:#fff"></div>
<svg style="left:695.8px;top:387.6px" width="4" height="4" viewBox="0 0 4 4"><path d="M0 0h3.5L0 3z" fill="#e33"/></svg>
</body></html>
